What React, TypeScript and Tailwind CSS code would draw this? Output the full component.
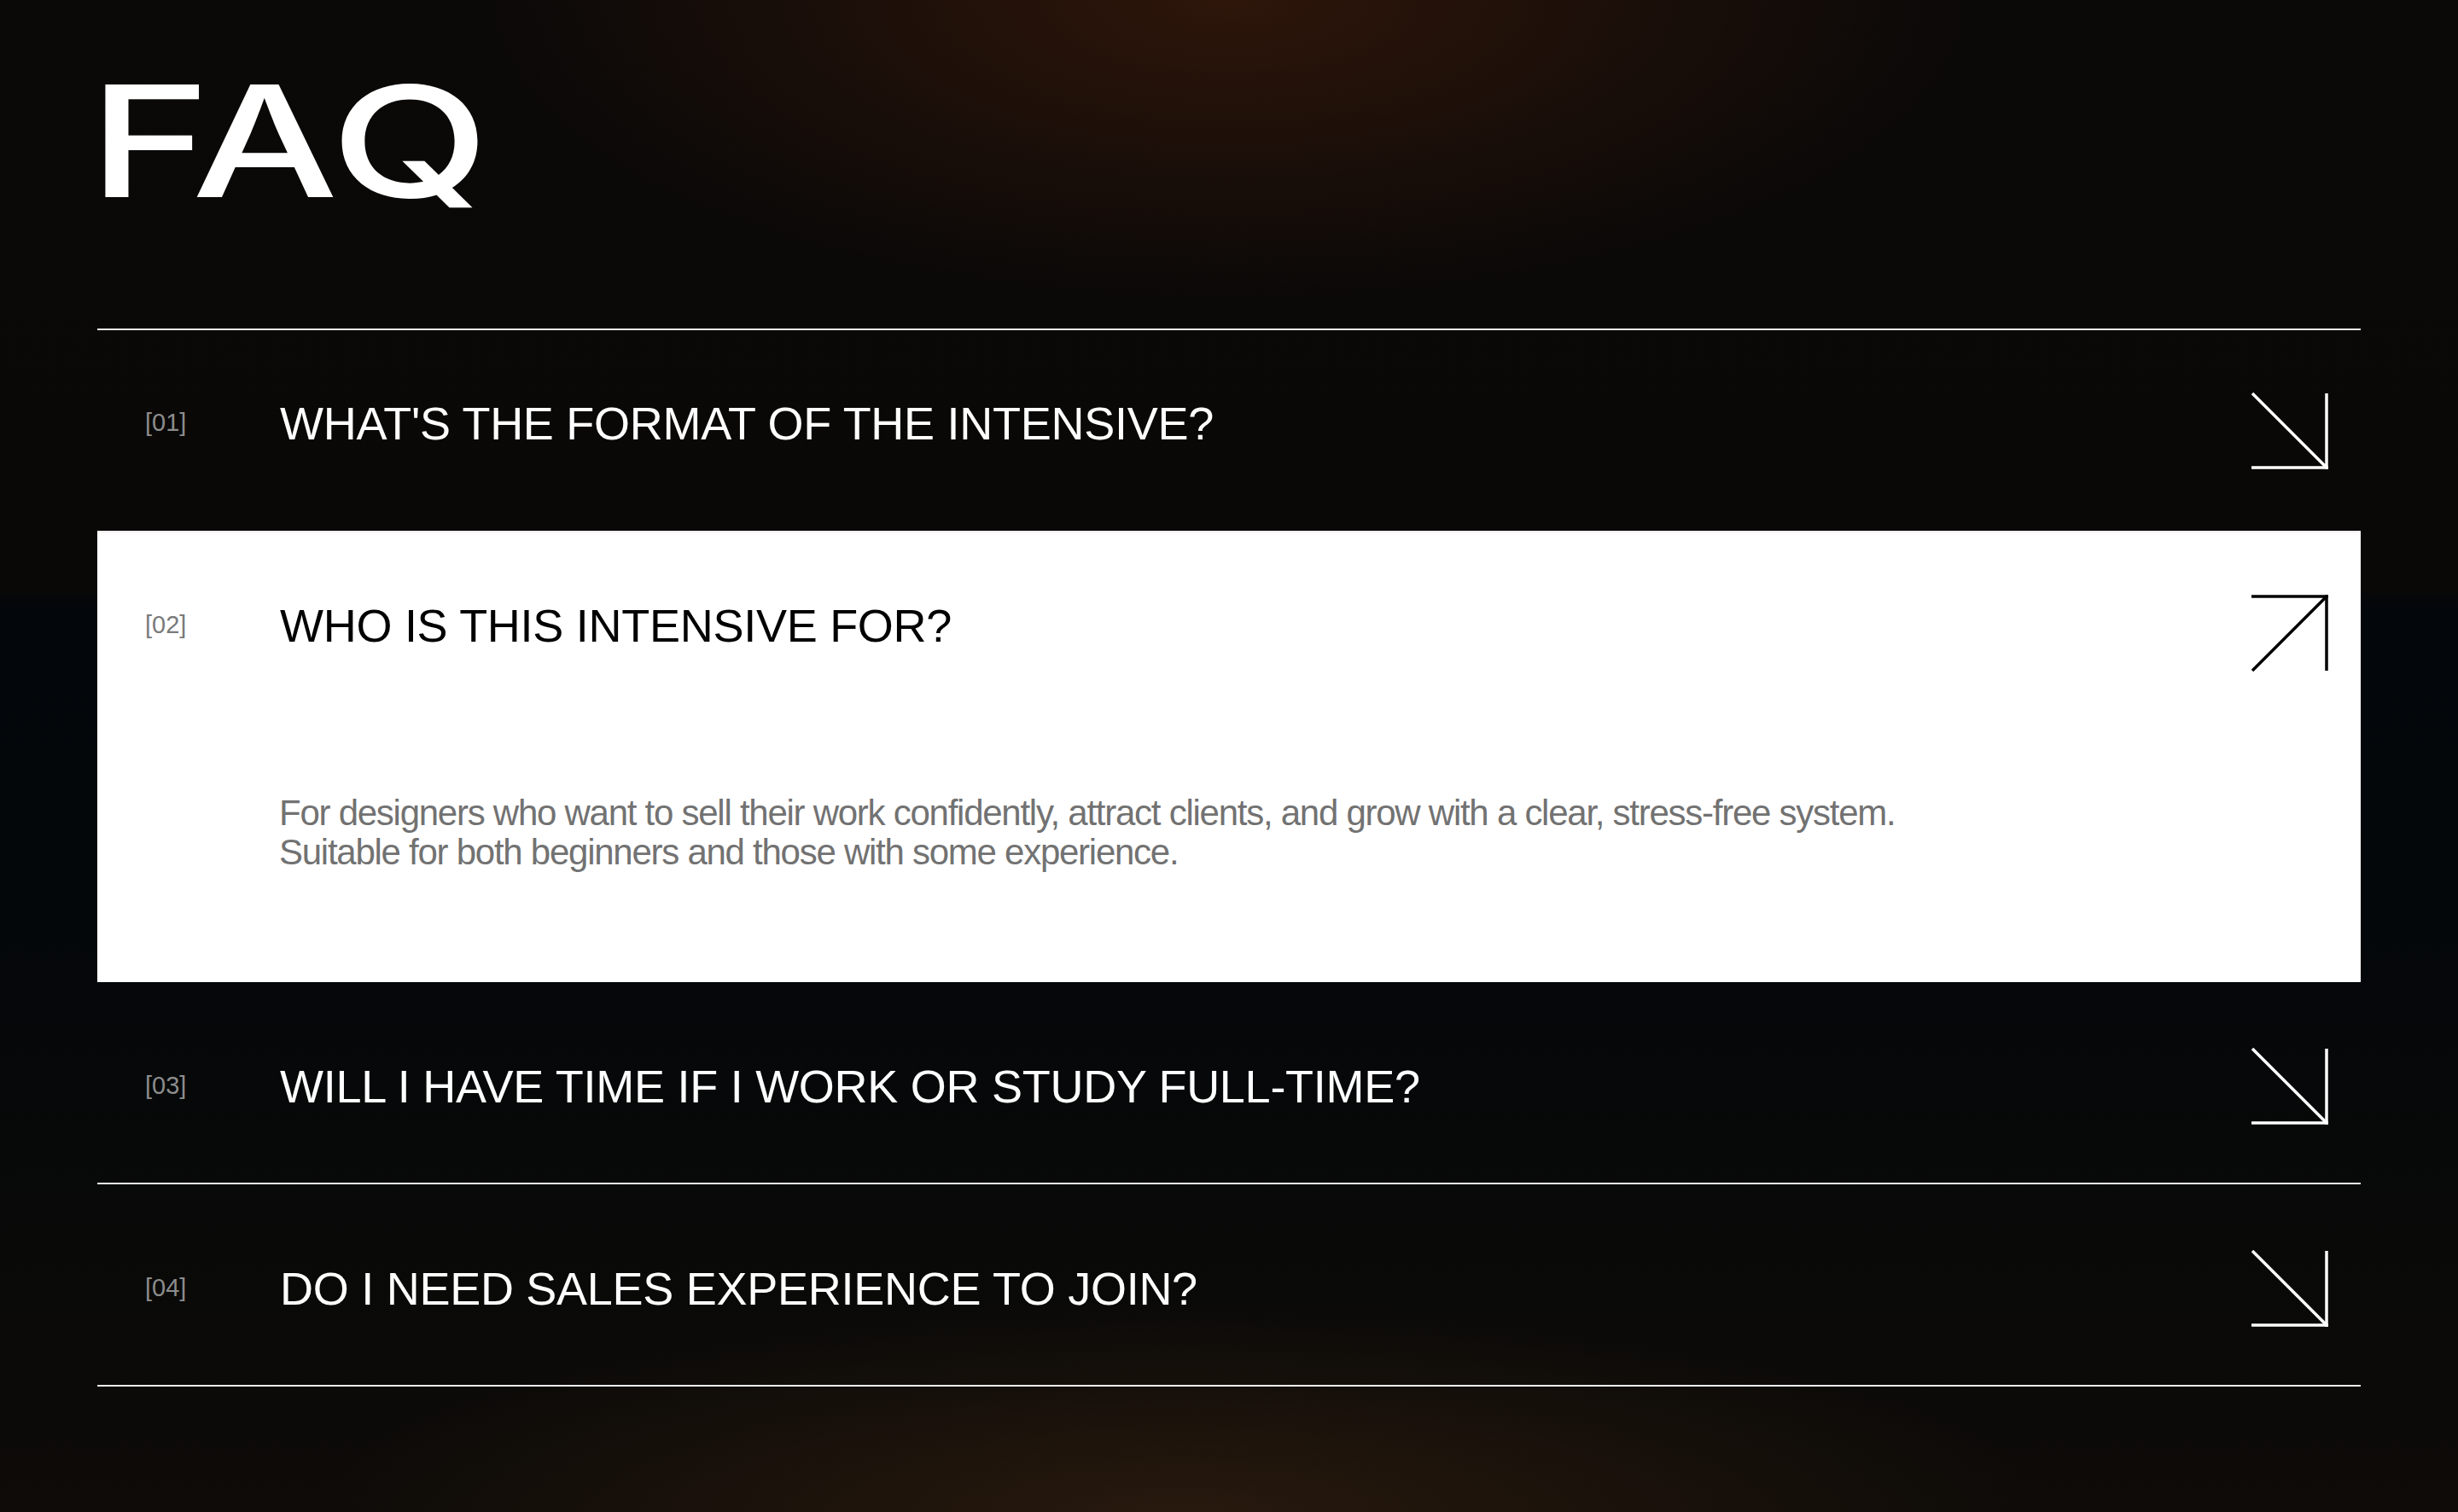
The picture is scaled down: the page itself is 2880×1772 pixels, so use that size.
import { Fragment } from "react";

type Faq = {
  num: string;
  question: string;
  answer?: string[];
};

const faqs: Faq[] = [
  { num: "[01]", question: "What's the format of the intensive?" },
  {
    num: "[02]",
    question: "Who is this intensive for?",
    answer: [
      "For designers who want to sell their work confidently, attract clients, and grow with a clear, stress-free system.",
      "Suitable for both beginners and those with some experience.",
    ],
  },
  { num: "[03]", question: "Will I have time if I work or study full-time?" },
  { num: "[04]", question: "Do I need sales experience to join?" },
];

// arrow glyph, down-right when closed / up-right when open
const Arrow = ({ open }: { open: boolean }) => (
  <svg
    width="90"
    height="90"
    viewBox="0 0 90 90"
    fill="none"
    stroke="currentColor"
    strokeWidth="3.5"
    className="shrink-0"
  >
    {open ? (
      <>
        <path d="M0 2H90" />
        <path d="M88 0V89" />
        <path d="M1 89L88 2" />
      </>
    ) : (
      <>
        <path d="M88 1V90" />
        <path d="M0 88H90" />
        <path d="M1 1L88 88" />
      </>
    )}
  </svg>
);

const FaqItem = ({
  item,
  open,
  afterOpen,
}: {
  item: Faq;
  open: boolean;
  afterOpen: boolean;
}) => {
  return (
    <div
      className={
        open
          ? "bg-white text-black border-b-2 border-white"
          : "text-white border-b-2 border-[#efefef]"
      }
    >
      <div
        className={`h-[235px] flex items-center pl-[56px] pr-[38px] ${
          afterOpen ? "pt-[8px]" : ""
        }`}
      >
        <div
          className={`flex-1 flex items-center ${
            afterOpen ? "" : "mb-[18px]"
          }`}
        >
          <span
            className={`w-[158px] shrink-0 text-[29px] leading-none ${
              open ? "text-[#7a7a7a]" : "text-[#8c8c8c]"
            }`}
          >
            {item.num}
          </span>
          <span className="flex-1 text-[54px] leading-none uppercase tracking-[-0.005em]">
            {item.question}
          </span>
        </div>
        <Arrow open={open} />
      </div>

      {open && item.answer ? (
        <div className="pl-[213px] pt-[71px] pb-[127px] text-[42px] leading-[46px] text-[#727272] tracking-[-0.03em]">
          {item.answer.map((line, i) => (
            <Fragment key={i}>
              {line}
              {i < item.answer!.length - 1 ? <br /> : null}
            </Fragment>
          ))}
        </div>
      ) : null}
    </div>
  );
};

export default function App() {
  const openIdx = 1;

  return (
    <div className="min-h-screen w-full overflow-hidden px-[114px] pt-[75px] font-['Liberation_Sans',Arial,sans-serif] bg-[#070707] [background-image:radial-gradient(ellipse_30%_20%_at_50%_0%,rgba(80,34,12,0.5),transparent),radial-gradient(ellipse_35%_14%_at_48%_100%,rgba(70,42,20,0.45),transparent),linear-gradient(to_bottom,#0b0908_0%,#090807_39%,#03060a_40%,#04070a_62%,#080908_80%,#0e0b08_100%)]">
      <h1 className="w-fit -ml-[10px] font-['Inter',sans-serif] font-medium text-[181px] leading-none text-white origin-left scale-x-[1.337]">
        FAQ
      </h1>

      <div className="mt-[129px] border-t-2 border-[#efefef]">
        {faqs.map((f, i) => (
          <FaqItem
            key={f.num}
            item={f}
            open={i === openIdx}
            afterOpen={i > openIdx}
          />
        ))}
      </div>
    </div>
  );
}
